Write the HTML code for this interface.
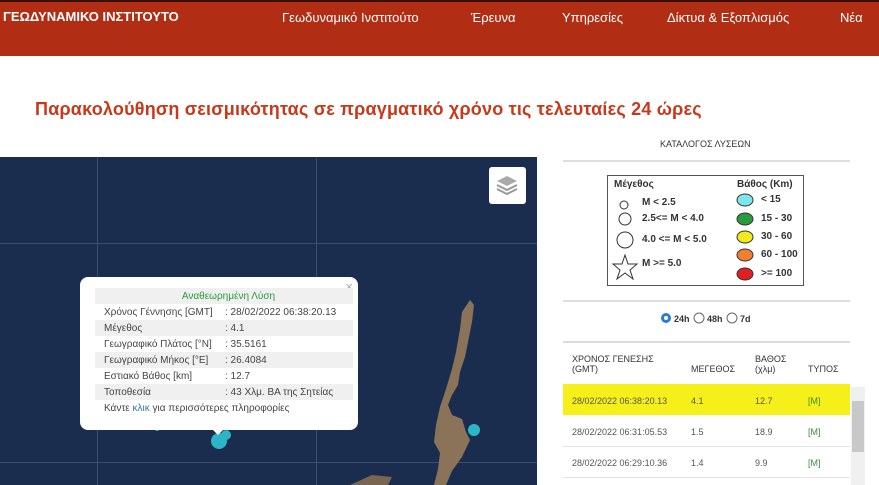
<!DOCTYPE html>
<html><head><meta charset="utf-8"><style>
*{margin:0;padding:0;box-sizing:border-box}
body{width:879px;height:485px;overflow:hidden;background:#fff;font-family:"Liberation Sans",sans-serif;position:relative}
.hdr{position:absolute;left:0;top:0;width:879px;height:56px;background:#b12e15;border-top:2px solid #3a0e05}
.hdr div{position:absolute;top:8px;color:#fff;font-size:13px}
h1{position:absolute;left:35px;top:99px;font-size:18px;color:#c9381a;font-weight:bold;letter-spacing:0.2px}
.map{position:absolute;left:0;top:157px;width:537px;height:328px;background:#1a2d4e;overflow:hidden}
.gl{position:absolute;background:#3a4e70}
.pop{position:absolute;left:80px;top:277px;width:278px;height:153px;background:#fff;border-radius:8px}
.pop table{position:absolute;left:15px;top:11px;width:258px;border-collapse:collapse;font-size:10px;color:#444}
.pop td{height:16px;padding-left:9px}
.pop tr:nth-child(odd) td{background:#f0f0f0}
.r{position:absolute;font-size:9px;color:#333}
.lg{font-size:10px}
</style></head><body>
<div class="hdr">
<div style="left:3px;font-weight:bold;top:7px">ΓΕΩΔΥΝΑΜΙΚΟ ΙΝΣΤΙΤΟΥΤΟ</div>
<div style="left:282px">Γεωδυναμικό Ινστιτούτο</div>
<div style="left:471px">Έρευνα</div>
<div style="left:562px">Υπηρεσίες</div>
<div style="left:667px">Δίκτυα &amp; Εξοπλισμός</div>
<div style="left:840px">Νέα</div>
</div>
<h1>Παρακολούθηση σεισμικότητας σε πραγματικό χρόνο τις τελευταίες 24 ώρες</h1>
<div class="map">
<div class="gl" style="left:97px;top:0;width:1px;height:328px"></div>
<div class="gl" style="left:316px;top:0;width:1px;height:328px"></div>
<div class="gl" style="left:0;top:86px;width:537px;height:1px"></div>
<div class="gl" style="left:0;top:305px;width:537px;height:1px"></div>
<svg width="537" height="328" style="position:absolute;left:0;top:0">
<path d="M470 143 L474 148 L472 165 L468 185 L465 200 L460 215 L458 228 L452 238 L448 248 L452 258 L462 262 L466 275 L470 283 L462 300 L452 314 L446 328 L434 328 L438 312 L440 296 L434 285 L436 268 L440 250 L446 232 L452 212 L456 195 L460 172 L462 155 Z" fill="#8a7358"/>
<path d="M350 328 L372 318 L392 320 L388 328 Z" fill="#7a6650"/>
<circle cx="219" cy="284" r="8" fill="#2bb5c6"/><circle cx="226" cy="278" r="5" fill="#2bb5c6"/>
<circle cx="474" cy="273" r="6" fill="#2bb5c6"/>
<circle cx="157" cy="271" r="3" fill="#2bb5c6"/>
</svg>
<div style="position:absolute;left:489px;top:10px;width:37px;height:37px;background:#fff;border-radius:3px">
<svg width="37" height="37"><path d="M8 22 L18 27 L28 22 M8 18 L18 23 L28 18" stroke="#999" fill="none" stroke-width="2"/><path d="M8 14 L18 9 L28 14 L18 19 Z" fill="#aaa"/></svg></div>
</div>
<div class="pop">
<div style="position:absolute;right:5px;top:2px;color:#aaa;font-size:13px">×</div>
<table>
<tr><td colspan="2" style="text-align:center;color:#2a9a3a">Αναθεωρημένη Λύση</td></tr>
<tr><td style="width:121px">Χρόνος Γέννησης [GMT]</td><td>: 28/02/2022 06:38:20.13</td></tr>
<tr><td>Μέγεθος</td><td>: 4.1</td></tr>
<tr><td>Γεωγραφικό Πλάτος [°N]</td><td>: 35.5161</td></tr>
<tr><td>Γεωγραφικό Μήκος [°E]</td><td>: 26.4084</td></tr>
<tr><td>Εστιακό Βάθος [km]</td><td>: 12.7</td></tr>
<tr><td>Τοποθεσία</td><td>: 43 Χλμ. ΒΑ της Σητείας</td></tr>
<tr><td colspan="2" style="background:#fff">Κάντε <span style="color:#2a7ab0">κλικ</span> για περισσότερες πληροφορίες</td></tr>
</table>
<div style="position:absolute;left:130px;top:150px;width:0;height:0;border-left:8px solid transparent;border-right:8px solid transparent;border-top:8px solid #fff"></div>
</div>
<div style="position:absolute;left:660px;top:139px;font-size:9px;color:#333">ΚΑΤΑΛΟΓΟΣ ΛΥΣΕΩΝ</div>
<div style="position:absolute;left:563px;top:160px;width:287px;height:2px;background:#ddd"></div>
<div style="position:absolute;left:607px;top:175px;width:197px;height:111px;border:1px solid #555"></div>
<div class="r lg" style="left:614px;top:179px;font-weight:bold">Μέγεθος</div>
<div class="r lg" style="left:737px;top:179px;font-weight:bold">Βάθος (Km)</div>
<svg width="879" height="485" style="position:absolute;left:0;top:0">
<circle cx="624" cy="205" r="4" fill="none" stroke="#333"/>
<circle cx="625" cy="219" r="6" fill="none" stroke="#333"/>
<circle cx="625" cy="240" r="8" fill="none" stroke="#333"/>
<path d="M625 255 L628 264 L637 264 L630 270 L633 279 L625 273 L617 279 L620 270 L613 264 L622 264 Z" fill="none" stroke="#333"/>
<ellipse cx="745" cy="200" rx="8" ry="6" fill="#7be6ec" stroke="#333"/>
<ellipse cx="745" cy="219" rx="8" ry="6" fill="#2a9a40" stroke="#333"/>
<ellipse cx="745" cy="237" rx="8" ry="6" fill="#f2ea1a" stroke="#333"/>
<ellipse cx="745" cy="255" rx="8" ry="6" fill="#f08030" stroke="#333"/>
<ellipse cx="745" cy="274" rx="8" ry="6" fill="#e02020" stroke="#333"/>
<circle cx="666" cy="318" r="5" fill="#2b7bd8"/><circle cx="666" cy="318" r="2" fill="#fff"/>
<circle cx="699" cy="318" r="5" fill="none" stroke="#666"/>
<circle cx="732" cy="318" r="5" fill="none" stroke="#666"/>
</svg>
<div class="r lg" style="left:642px;top:197px;font-weight:bold">M &lt; 2.5</div>
<div class="r lg" style="left:642px;top:213px;font-weight:bold">2.5&lt;= M &lt; 4.0</div>
<div class="r lg" style="left:642px;top:234px;font-weight:bold">4.0 &lt;= M &lt; 5.0</div>
<div class="r lg" style="left:642px;top:258px;font-weight:bold">M &gt;= 5.0</div>
<div class="r lg" style="left:761px;top:194px;font-weight:bold">&lt; 15</div>
<div class="r lg" style="left:761px;top:213px;font-weight:bold">15 - 30</div>
<div class="r lg" style="left:761px;top:231px;font-weight:bold">30 - 60</div>
<div class="r lg" style="left:761px;top:249px;font-weight:bold">60 - 100</div>
<div class="r lg" style="left:761px;top:268px;font-weight:bold">&gt;= 100</div>
<div style="position:absolute;left:563px;top:300px;width:287px;height:2px;background:#ddd"></div>
<div class="r" style="left:674px;top:314px;font-weight:bold">24h</div>
<div class="r" style="left:707px;top:314px;font-weight:bold">48h</div>
<div class="r" style="left:740px;top:314px;font-weight:bold">7d</div>
<div style="position:absolute;left:563px;top:341px;width:287px;height:2px;background:#ddd"></div>
<div class="r" style="left:572px;top:354px;line-height:10px">ΧΡΟΝΟΣ ΓΕΝΕΣΗΣ<br>(GMT)</div>
<div class="r" style="left:691px;top:364px">ΜΕΓΕΘΟΣ</div>
<div class="r" style="left:755px;top:354px;line-height:10px">ΒΑΘΟΣ<br>(χλμ)</div>
<div class="r" style="left:808px;top:364px">ΤΥΠΟΣ</div>
<div style="position:absolute;left:563px;top:384px;width:287px;height:31px;background:#f5f01a"></div>
<div style="position:absolute;left:563px;top:446px;width:287px;height:1px;background:#e3e3e3"></div>
<div style="position:absolute;left:563px;top:477px;width:287px;height:1px;background:#e3e3e3"></div>
<div style="position:absolute;left:851px;top:387px;width:14px;height:98px;background:#f0f0f0"></div>
<div style="position:absolute;left:852px;top:401px;width:12px;height:51px;background:#c8c8c8"></div>
<div class="r" style="left:572px;top:396px;color:#555">28/02/2022 06:38:20.13</div><div class="r" style="left:691px;top:396px;color:#555">4.1</div><div class="r" style="left:755px;top:396px;color:#555">12.7</div><div class="r" style="left:808px;top:396px;color:#3a8a3a">[M]</div>
<div class="r" style="left:572px;top:427px;color:#555">28/02/2022 06:31:05.53</div><div class="r" style="left:691px;top:427px;color:#555">1.5</div><div class="r" style="left:755px;top:427px;color:#555">18.9</div><div class="r" style="left:808px;top:427px;color:#3a8a3a">[M]</div>
<div class="r" style="left:572px;top:458px;color:#555">28/02/2022 06:29:10.36</div><div class="r" style="left:691px;top:458px;color:#555">1.4</div><div class="r" style="left:755px;top:458px;color:#555">9.9</div><div class="r" style="left:808px;top:458px;color:#3a8a3a">[M]</div>
</body></html>
